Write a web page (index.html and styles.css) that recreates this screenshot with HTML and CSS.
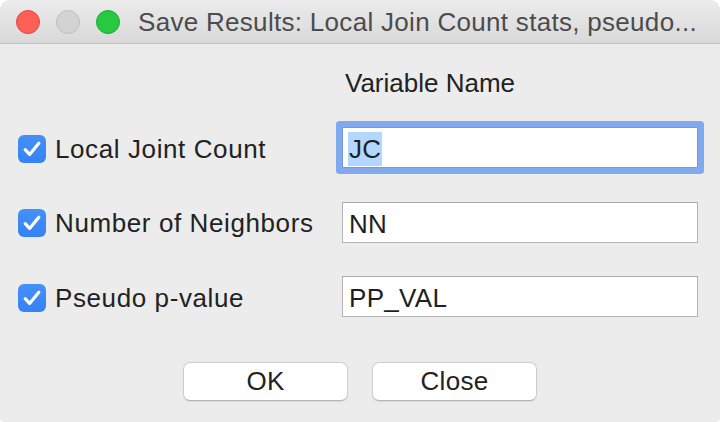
FILE: index.html
```html
<!DOCTYPE html>
<html lang="en">
<head>
<meta charset="utf-8">
<title>Save Results</title>
<link rel="stylesheet" href="styles.css">
</head>
<body>
<div class="window">
  <div class="titlebar">
    <div class="lights">
      <span class="light red"></span>
      <span class="light gray"></span>
      <span class="light green"></span>
    </div>
    <div class="title">Save Results: Local Join Count stats, pseudo...</div>
  </div>
  <div class="content">
    <div class="header">Variable Name</div>
    <div class="form">
      <label class="check-label">
        <span class="checkbox"><svg viewBox="0 0 28 28" width="28" height="28"><path d="M7.2 14.6 L11.6 19.4 L20.8 8.2" fill="none" stroke="#fff" stroke-width="3.2" stroke-linecap="round" stroke-linejoin="round"/></svg></span>
        <span class="label-text">Local Joint Count</span>
      </label>
      <div class="field focused"><span class="selected">JC</span></div>

      <label class="check-label">
        <span class="checkbox"><svg viewBox="0 0 28 28" width="28" height="28"><path d="M7.2 14.6 L11.6 19.4 L20.8 8.2" fill="none" stroke="#fff" stroke-width="3.2" stroke-linecap="round" stroke-linejoin="round"/></svg></span>
        <span class="label-text">Number of Neighbors</span>
      </label>
      <div class="field">NN</div>

      <label class="check-label">
        <span class="checkbox"><svg viewBox="0 0 28 28" width="28" height="28"><path d="M7.2 14.6 L11.6 19.4 L20.8 8.2" fill="none" stroke="#fff" stroke-width="3.2" stroke-linecap="round" stroke-linejoin="round"/></svg></span>
        <span class="label-text">Pseudo p-value</span>
      </label>
      <div class="field">PP_VAL</div>
    </div>
    <div class="buttons">
      <button class="btn">OK</button>
      <button class="btn">Close</button>
    </div>
  </div>
</div>
</body>
</html>
```
FILE: styles.css
```css
* { box-sizing: border-box; }
html, body {
  margin: 0;
  padding: 0;
  background: #ffffff;
}
body {
  font-family: "Liberation Sans", Arial, sans-serif;
  color: #222222;
}
.window {
  width: 720px;
  height: 422px;
  background: #ececec;
  border-radius: 10px 10px 4px 4px;
  overflow: hidden;
}
.titlebar {
  height: 44px;
  display: flex;
  align-items: center;
  padding-left: 16px;
  background: linear-gradient(#ebebeb, #d9d9d9);
  border-bottom: 1px solid #c2c2c2;
}
.lights {
  display: flex;
  gap: 16px;
}
.light {
  width: 24px;
  height: 24px;
  border-radius: 50%;
  display: block;
}
.light.red { background: #fe5f57; border: 1px solid #e2463f; }
.light.gray { background: #d3d3d3; border: 1px solid #bdbdbd; }
.light.green { background: #28c840; border: 1px solid #1eab2e; }
.title {
  margin-left: 18px;
  font-size: 26px;
  letter-spacing: 0.3px;
  color: #4c4c4c;
  white-space: nowrap;
  padding-top: 1px;
}
.content {
  padding: 24px 22px 0 18px;
}
.header {
  margin-left: 327px;
  font-size: 26px;
  line-height: 30px;
  margin-bottom: 29px;
}
.form {
  display: grid;
  grid-template-columns: 324px 356px;
  grid-auto-rows: 41px;
  row-gap: 33.5px;
}
.check-label {
  display: flex;
  align-items: center;
  gap: 9px;
  padding-top: 2px;
}
.checkbox {
  width: 28px;
  height: 28px;
  border-radius: 6px;
  background: linear-gradient(#4590f8, #3482f6);
  display: flex;
}
.label-text {
  font-size: 26px;
  line-height: 30px;
  letter-spacing: 0.6px;
  color: #222222;
}
.field {
  background: #ffffff;
  border: 1px solid #b4b4b4;
  border-top-color: #a9a9a9;
  font-size: 26px;
  line-height: 34px;
  padding: 4px 6px 0 6px;
  color: #1f1f1f;
  letter-spacing: 0.3px;
}
.field.focused {
  border-color: #6f9be6;
  border-radius: 1px;
  box-shadow: 0 0 0 6px #80a9ee;
  padding: 4px 6px 0 5px;
}
.selected {
  display: inline-block;
  background: #b3d7ff;
  height: 34px;
  padding: 0 1px;
}
.buttons {
  display: flex;
  justify-content: center;
  gap: 24px;
  margin-top: 45px;
  margin-left: -18px;
  margin-right: -22px;
}
.btn {
  width: 165px;
  height: 39px;
  border-radius: 7px;
  background: #ffffff;
  border: 1px solid #cdcdcd;
  border-bottom-color: #b5b5b5;
  box-shadow: 0 1px 1px rgba(0,0,0,0.08);
  font-family: "Liberation Sans", Arial, sans-serif;
  font-size: 26px;
  letter-spacing: 0.3px;
  color: #222222;
  padding: 0;
}
```
